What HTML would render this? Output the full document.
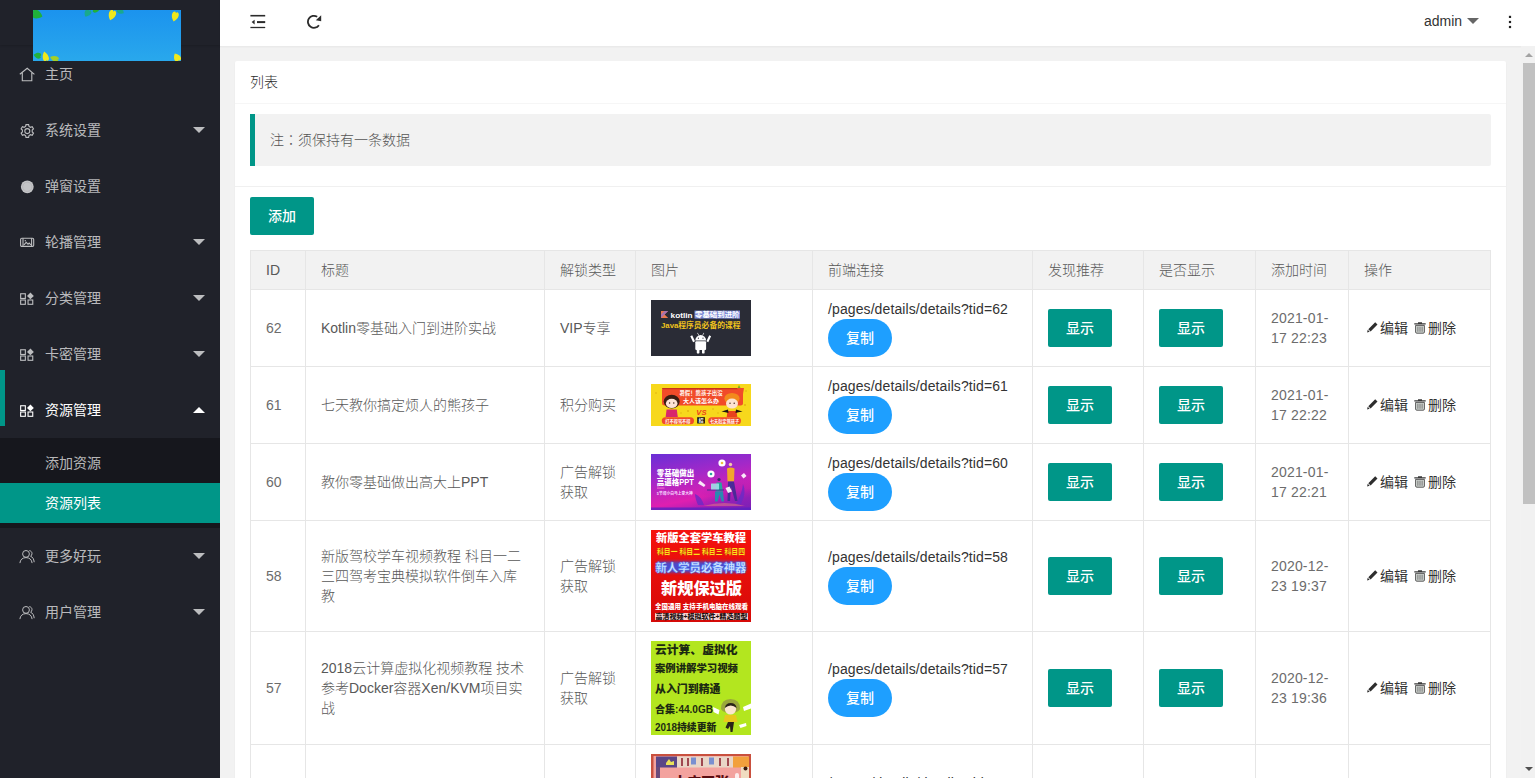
<!DOCTYPE html>
<html lang="zh-CN">
<head>
<meta charset="utf-8">
<title>资源列表</title>
<style>
*{box-sizing:border-box;margin:0;padding:0}
html,body{width:1535px;height:778px;overflow:hidden}
body{position:relative;background:#f2f2f2;color:#333;font:14px/20px "Liberation Sans","Noto Sans CJK SC",sans-serif}
a{color:#333;text-decoration:none}
/* ---------- sidebar ---------- */
.side{position:absolute;left:0;top:0;width:220px;height:778px;background:#20222a;color:rgba(255,255,255,.7)}
.logo{position:absolute;left:0;top:0;width:220px;height:45px;box-shadow:0 1px 2px 0 rgba(0,0,0,.15)}
.logo svg{position:absolute;left:33px;top:10px}
.nav{position:absolute;left:0;top:46px;width:220px;list-style:none}
.nav li.item>a{display:block;position:relative;height:56px;line-height:56px;padding-left:45px;color:rgba(255,255,255,.7);font-size:14px}
.nav li.item.on>a{color:#fff}
.nav .ico{position:absolute;left:19px;top:20px;width:16px;height:16px}
.nav .more{position:absolute;right:15px;top:25px;width:0;height:0;border:6px solid transparent;border-top-color:rgba(255,255,255,.7)}
.nav li.on .more{top:19px;border-top-color:transparent;border-bottom-color:#fff}
.nav dl{background:rgba(0,0,0,.3);padding:5px 0}
.nav dd a{display:block;height:40px;line-height:40px;padding-left:45px;color:rgba(255,255,255,.7)}
.nav dd.this a{background:#009688;color:#fff}
.navbar{position:absolute;left:0;top:370px;width:5px;height:56px;background:#009688}
/* ---------- header ---------- */
.head{position:absolute;left:220px;top:0;width:1315px;height:46px;background:#fff;box-shadow:0 1px 2px 0 rgba(0,0,0,.05)}
.head svg{position:absolute}
.head .user{position:absolute;left:1204px;top:0;line-height:42px;font-size:14px;color:#333}
.head .tri{position:absolute;left:1247px;top:18px;width:0;height:0;border:6px solid transparent;border-top-color:#666}
/* ---------- body ---------- */
.card{position:absolute;left:235px;width:1271px;background:#fff;border-radius:2px;box-shadow:0 1px 2px 0 rgba(0,0,0,.05)}
.card-h{height:43px;line-height:42px;padding:0 15px;border-bottom:1px solid #f6f6f6;color:#2c2c2c;font-size:14px;font-weight:300}
.quote{font-weight:300;margin:10px 15px 10px;padding:15px;line-height:22px;border-left:5px solid #009688;border-radius:0 2px 2px 0;background:#f2f2f2;color:#555}
.sep{position:absolute;left:0;top:125px;width:100%;height:1px;background:#f0f0f0}
.btn{font-weight:500;display:inline-block;height:38px;line-height:38px;padding:0 18px;background:#009688;color:#fff;border-radius:2px;font-size:14px;white-space:nowrap;text-align:center}
.btn.blue{background:#1e9fff;border-radius:100px}
table{font-weight:300;position:absolute;left:15px;top:189px;width:1240px;border-collapse:collapse;table-layout:fixed;color:#585858}
th,td{border:1px solid #e6e6e6;padding:9px 15px;line-height:20px;font-size:14px;text-align:left;font-weight:300;vertical-align:middle;word-break:break-all}
th{background:#f2f2f2;height:39px}
td .pic{display:block;width:100px}
td a.lk{letter-spacing:.1px}
td.dt{letter-spacing:.18px;color:#6c6c6c}
td.n{color:#6c6c6c}
td.op a{color:#333;white-space:nowrap;font-weight:400}
td.op svg{display:inline-block;vertical-align:-2px;width:16px;height:16px}
/* ---------- scrollbar ---------- */
.sb{position:absolute;left:1521px;top:46px;width:14px;height:732px;background:#f1f1f1}
.sb .thumb{position:absolute;left:2px;top:17px;width:12px;height:441px;background:#c1c1c1}
.sb .up,.sb .dn{position:absolute;left:4px;width:0;height:0;border:4px solid transparent}
.sb .up{top:3px;border-bottom-color:#a3a3a3}
.sb .dn{bottom:3px;border-top-color:#505050}
</style>
</head>
<body>

<div class="side">
  <div class="logo">
    <svg width="148" height="51" viewBox="0 0 148 51">
      <defs><linearGradient id="sky" x1="0" y1="0" x2="0" y2="1"><stop offset="0" stop-color="#1b93ee"/><stop offset="1" stop-color="#29a8ec"/></linearGradient></defs>
      <rect width="148" height="51" fill="url(#sky)"/>
      <path d="M0 5C-5 1-4.500-4-1.500-4.500-.5-4.600 0-3.500 0-3 0-3.500.5-4.600 1.500-4.500 4.500-4 5 1 0 5z" fill="#20b13a" transform="translate(4 4.5) rotate(-70) scale(1.15 1.15)"/>
      <path d="M0 5C-5 1-4.500-4-1.500-4.500-.5-4.600 0-3.500 0-3 0-3.500.5-4.600 1.500-4.500 4.500-4 5 1 0 5z" fill="#19a98e" transform="translate(54.5 3) rotate(35) scale(0.85 0.85)"/>
      <path d="M0 5C-5 1-4.500-4-1.500-4.500-.5-4.600 0-3.500 0-3 0-3.500.5-4.600 1.500-4.500 4.500-4 5 1 0 5z" fill="#22b03a" transform="translate(63 -0.5) rotate(-100) scale(0.8 0.8)"/>
      <path d="M0 5C-5 1-4.500-4-1.500-4.500-.5-4.600 0-3.500 0-3 0-3.500.5-4.600 1.500-4.500 4.500-4 5 1 0 5z" fill="#efe81c" transform="translate(79 5) rotate(20) scale(0.95 1.1)"/>
      <path d="M0 5C-5 1-4.500-4-1.500-4.500-.5-4.600 0-3.500 0-3 0-3.500.5-4.600 1.500-4.500 4.500-4 5 1 0 5z" fill="#19a98e" transform="translate(87.5 1) rotate(-55) scale(0.8 0.8)"/>
      <path d="M0 5C-5 1-4.500-4-1.500-4.500-.5-4.600 0-3.500 0-3 0-3.500.5-4.600 1.500-4.500 4.500-4 5 1 0 5z" fill="#efe81c" transform="translate(142 6.5) rotate(15) scale(0.9 1.05)"/>
      <path d="M0 5C-5 1-4.500-4-1.500-4.500-.5-4.600 0-3.500 0-3 0-3.500.5-4.600 1.500-4.500 4.500-4 5 1 0 5z" fill="#efe81c" transform="translate(139 -3) rotate(0) scale(0.6 0.6)"/>
      <path d="M0 5C-5 1-4.500-4-1.500-4.500-.5-4.600 0-3.500 0-3 0-3.500.5-4.600 1.500-4.500 4.500-4 5 1 0 5z" fill="#23b03c" transform="translate(4.5 45.5) rotate(100) scale(0.8 0.8)"/>
      <path d="M0 5C-5 1-4.500-4-1.500-4.500-.5-4.600 0-3.500 0-3 0-3.500.5-4.600 1.500-4.500 4.500-4 5 1 0 5z" fill="#efe81c" transform="translate(12.5 46.5) rotate(165) scale(0.8 1.05)"/>
      <path d="M0 5C-5 1-4.500-4-1.500-4.500-.5-4.600 0-3.500 0-3 0-3.500.5-4.600 1.500-4.500 4.500-4 5 1 0 5z" fill="#a4cf26" transform="translate(21.5 48.5) rotate(110) scale(0.75 0.95)"/>
      <path d="M0 5C-5 1-4.500-4-1.500-4.500-.5-4.600 0-3.500 0-3 0-3.500.5-4.600 1.500-4.500 4.500-4 5 1 0 5z" fill="#efe81c" transform="translate(144 47.5) rotate(150) scale(0.9 0.9)"/>
    </svg>
  </div>
  <ul class="nav">
    <li class="item"><a><svg class="ico" viewBox="0 0 16 16" fill="none" stroke="#bdbec0" stroke-width="1.100"><path d="M.8 8.300 8.200 2.300l7.200 6M3.300 6.800v7.900h9.500V6.800"/></svg>主页</a></li>
    <li class="item"><a><svg class="ico" viewBox="0 0 16 16" fill="none" stroke="#bdbec0" stroke-width="1.100"><g transform="translate(.3 1.100)"><circle cx="8" cy="8" r="2.500"/><path d="M6.700 1.500h2.600l.4 1.800 1.500.9 1.700-.6 1.300 2.200-1.300 1.200v1.800l1.300 1.200-1.300 2.200-1.700-.6-1.500.9-.4 1.800H6.700l-.4-1.800-1.500-.9-1.700.6L1.800 10l1.300-1.200V7L1.800 5.800l1.300-2.200 1.700.6 1.500-.9z"/></g></svg>系统设置<i class="more"></i></a></li>
    <li class="item"><a><svg class="ico" viewBox="0 0 16 16"><circle cx="8.300" cy="8.800" r="6.400" fill="#c3c4c6"/><circle cx="8.300" cy="8.800" r="4.600" fill="none" stroke="#b2b3b6" stroke-width=".8"/></svg>弹窗设置</a></li>
    <li class="item"><a><svg class="ico" viewBox="0 0 16 16" fill="none" stroke="#bdbec0" stroke-width="1.100"><rect x="1.600" y="4.200" width="13.100" height="8.200" rx="1.200"/><path d="M4 4.200v8.200M12.600 4.200v8.200M5 10.800l2.200-2.400 1.800 1.800 1.200-1.200 1.600 1.800"/><circle cx="6.300" cy="6.700" r=".7" fill="#bdbec0" stroke="none"/></svg>轮播管理<i class="more"></i></a></li>
    <li class="item"><a><svg class="ico" viewBox="0 0 16 16" fill="none" stroke="#bdbec0" stroke-width="1.100"><rect x="1.650" y="3.750" width="4.700" height="4.700"/><rect x="1.650" y="10" width="4.700" height="4.300"/><rect x="9.050" y="10" width="4.700" height="4.300"/><path d="M11.400 2.500l3.400 3.400-3.400 3.400L8 5.900z" fill="#bdbec0" stroke="none"/></svg>分类管理<i class="more"></i></a></li>
    <li class="item"><a><svg class="ico" viewBox="0 0 16 16" fill="none" stroke="#bdbec0" stroke-width="1.100"><rect x="1.650" y="3.750" width="4.700" height="4.700"/><rect x="1.650" y="10" width="4.700" height="4.300"/><rect x="9.050" y="10" width="4.700" height="4.300"/><path d="M11.400 2.500l3.400 3.400-3.400 3.400L8 5.900z" fill="#bdbec0" stroke="none"/></svg>卡密管理<i class="more"></i></a></li>
    <li class="item on"><a><svg class="ico" viewBox="0 0 16 16" fill="none" stroke="#fff" stroke-width="1.100"><rect x="1.650" y="3.750" width="4.700" height="4.700"/><rect x="1.650" y="10" width="4.700" height="4.300"/><rect x="9.050" y="10" width="4.700" height="4.300"/><path d="M11.400 2.500l3.400 3.400-3.400 3.400L8 5.900z" fill="#fff" stroke="none"/></svg>资源管理<i class="more"></i></a>
      <dl><dd><a>添加资源</a></dd><dd class="this"><a>资源列表</a></dd></dl>
    </li>
    <li class="item"><a><svg class="ico" viewBox="0 0 16 16" fill="none" stroke="#bdbec0" stroke-width="1"><circle cx="7" cy="5.900" r="3.400"/><path d="M.9 15.100c.3-3.400 2.600-5.500 6.100-5.500s5.800 2.100 6.100 5.500"/><path d="M10.300 2.600c1.700.2 2.700 1.500 2.700 3 0 1.200-.6 2.100-1.400 2.700 2 .7 3.300 2.600 3.600 5.900"/></svg>更多好玩<i class="more"></i></a></li>
    <li class="item"><a><svg class="ico" viewBox="0 0 16 16" fill="none" stroke="#bdbec0" stroke-width="1"><circle cx="7" cy="5.900" r="3.400"/><path d="M.9 15.100c.3-3.400 2.600-5.500 6.100-5.500s5.800 2.100 6.100 5.500"/><path d="M10.300 2.600c1.700.2 2.700 1.500 2.700 3 0 1.200-.6 2.100-1.400 2.700 2 .7 3.300 2.600 3.600 5.900"/></svg>用户管理<i class="more"></i></a></li>
  </ul>
  <div class="navbar"></div>
</div>

<div class="head">
  <svg style="left:30px;top:13px" width="16" height="16" viewBox="0 0 16 16" fill="none" stroke="#2b2b2b"><path d="M.4 2.700h14.800" stroke-width="1.600"/><path d="M7 9.100h8.200" stroke-width="2"/><path d="M.4 14.500h14.800" stroke-width="1.300"/><path d="M4.600 6.800v4.600L1.600 9.100z" fill="#2b2b2b" stroke="none"/></svg>
  <svg style="left:86px;top:13px" width="16" height="16" viewBox="0 0 16 16" fill="none" stroke="#2b2b2b" stroke-width="1.800"><path d="M12.900 12.200A6 6 0 1 1 11.200 3.800"/><path d="M15.200 2.300v5.900l-5.400-.9z" fill="#2b2b2b" stroke="none"/></svg>
  <span class="user">admin</span><i class="tri"></i>
  <svg style="left:1288px;top:15px" width="4" height="16" viewBox="0 0 4 16" fill="#222"><rect x=".9" y=".8" width="2.200" height="2.200"/><rect x=".9" y="5.900" width="2.200" height="2.200"/><rect x=".9" y="10.900" width="2.200" height="2.200"/></svg>
</div>

<div class="card" style="top:61px;height:830px">
  <div class="card-h">列表</div>
  <div class="quote">注<span lang="zh-TW" style="font-family:'Liberation Sans','Noto Sans CJK TC',sans-serif">：</span>须保持有一条数据</div>
  <div class="sep"></div>
  <a class="btn" style="position:absolute;left:15px;top:136px">添加</a>
  <table>
    <colgroup><col style="width:55px"><col style="width:239px"><col style="width:91px"><col style="width:177px"><col style="width:220px"><col style="width:111px"><col style="width:112px"><col style="width:93px"><col style="width:142px"></colgroup>
    <thead><tr><th>ID</th><th>标题</th><th>解锁类型</th><th>图片</th><th>前端连接</th><th>发现推荐</th><th>是否显示</th><th>添加时间</th><th>操作</th></tr></thead>
    <tbody>
      <tr style="height:77px"><td class="n">62</td><td>Kotlin零基础入门到进阶实战</td><td>VIP专享</td><td><svg class="pic" width="100" height="56" viewBox="0 0 100 56" font-family="Liberation Sans,Noto Sans CJK SC,sans-serif">
<rect width="100" height="56" fill="#2a2c36"/>
<path d="M10 10.900h7.200l-3.600 3.500 3.600 3.600H10z" fill="#e9784e"/><path d="M10 14.400l3.500-3.500H17.200L10 18z" fill="#8a6fd8" opacity=".7"/>
<text x="19.600" y="17.500" font-size="8" font-weight="700" fill="#fff" textLength="22" lengthAdjust="spacingAndGlyphs">kotlin</text>
<rect x="43.500" y="10.600" width="45.500" height="8" fill="#7c8ad6"/>
<text x="44" y="17.400" font-size="7.400" font-weight="700" fill="#fff" textLength="44.500" lengthAdjust="spacingAndGlyphs">零基础到进阶</text>
<text x="10" y="28.300" font-size="8" font-weight="700" fill="#f0c31c" textLength="79.500" lengthAdjust="spacingAndGlyphs">Java程序员必备的课程</text>
<g fill="#fff"><path d="M44.300 40.500a5.400 5.400 0 0 1 10.800 0z"/><rect x="44.300" y="41.300" width="10.800" height="8.600" rx="1"/><rect x="45.800" y="49" width="2.600" height="4.600" rx="1.200"/><rect x="51" y="49" width="2.600" height="4.600" rx="1.200"/><path d="M39.300 36.200l1.900-.9 2.800 6-1.900.9zM60.100 36.200l-1.900-.9-2.800 6 1.900.9z"/><path d="M46.200 33l.5-.3 1.400 2.500-.5.300zM53.200 33l-.5-.3-1.400 2.500.5.300z"/></g>
<circle cx="47.400" cy="38.200" r=".6" fill="#2a2c36"/><circle cx="52" cy="38.200" r=".6" fill="#2a2c36"/>
</svg></td><td><a class="lk">/pages/details/details?tid=62</a><br><a class="btn blue">复制</a></td><td><a class="btn">显示</a></td><td><a class="btn">显示</a></td><td class="dt">2021-01-17 22:23</td><td class="op"><a><svg viewBox="0 0 16 16"><path d="M11.200 3.300l2.300 2.300-6.900 6.900-2.300-2.300zM3.700 10.800l2 2-2.600.6z" fill="#2e2e2e"/></svg>编辑</a> <a><svg viewBox="0 0 16 16"><path d="M2.300 4.300h11.400v1.100H2.300zM6 3.300h4v1H6z" fill="#3a3a3a"/><path d="M3.600 6.400h8.800V13a1.200 1.200 0 0 1-1.200 1.200H4.800A1.200 1.200 0 0 1 3.600 13z" fill="#d3d8d4" stroke="#4a4a4a" stroke-width=".9"/><path d="M5.900 7.600v5.200M8 7.600v5.200M10.100 7.600v5.200" stroke="#5a5a5a" stroke-width=".8"/></svg>删除</a></td></tr>
      <tr style="height:77px"><td class="n">61</td><td>七天教你搞定烦人的熊孩子</td><td>积分购买</td><td><svg class="pic" width="100" height="42" viewBox="0 0 100 42" font-family="Liberation Sans,Noto Sans CJK SC,sans-serif">
<rect width="100" height="42" fill="#f7d81c"/>
<g fill="#e0b010"><circle cx="5" cy="9" r=".8"/><circle cx="37" cy="27" r=".9"/><circle cx="62" cy="25" r=".8"/><circle cx="95" cy="7" r=".8"/><circle cx="94" cy="21" r=".9"/><circle cx="30" cy="29" r=".7"/><circle cx="67" cy="29" r=".7"/></g>
<rect x="11" y="4" width="81" height="17.500" rx="2.500" fill="#f14b29"/><rect x="11" y="4" width="81" height="1.200" rx=".6" fill="#c8321a"/>
<text x="50" y="11.200" font-size="5.400" font-weight="700" fill="#fff4ee" text-anchor="middle">暑假！熊孩子出没</text>
<text x="50" y="19" font-size="6" font-weight="700" fill="#fff" text-anchor="middle">大人该怎么办</text>
<ellipse cx="20.700" cy="17.600" rx="8" ry="6.800" fill="#3b1d12"/><ellipse cx="20.700" cy="19.400" rx="5.800" ry="4.600" fill="#fde3d6"/><path d="M15.600 25.500h10.200l1 7.500H14.600z" fill="#d9266c"/>
<circle cx="18.600" cy="19" r=".7" fill="#3b1d12"/><circle cx="22.800" cy="19" r=".7" fill="#3b1d12"/>
<ellipse cx="81" cy="14.500" rx="7.600" ry="5.600" fill="#f28a1c"/><ellipse cx="81" cy="19.600" rx="6" ry="5" fill="#fde3d0"/><path d="M76.500 27h9l.8 6H75.700z" fill="#e9421c"/>
<path d="M70.500 27.500l6.500-2 .5 3.500-3-.8zM91.500 27.500l-6.500-2-.5 3.500 3-.8z" fill="#1c1410"/>
<circle cx="79" cy="19.300" r=".7" fill="#3b1d12"/><circle cx="83.200" cy="19.300" r=".7" fill="#3b1d12"/>
<path d="M88 1l1.500 3-3 .2z" fill="#7ab020"/><path d="M86 4h7l-2 12z" fill="#f14b29"/>
<text x="50.400" y="30.600" font-size="7.600" font-weight="700" font-style="italic" fill="#f0421c" text-anchor="middle">VS</text>
<rect x="10.800" y="33.200" width="32.200" height="7" rx="3.500" fill="#f14b29"/><rect x="57.200" y="33.200" width="32.800" height="7" rx="3.500" fill="#f14b29"/>
<text x="26.900" y="38.500" font-size="4.200" font-weight="700" fill="#fff" text-anchor="middle">打不得骂不得</text>
<text x="73.600" y="38.500" font-size="4.200" font-weight="700" fill="#fff" text-anchor="middle">七天搞定熊孩子</text>
<rect x="46.200" y="33.200" width="7.700" height="6.300" fill="#141410"/>
<text x="50" y="38.300" font-size="5" font-weight="700" fill="#fff" text-anchor="middle">招</text>
</svg></td><td><a class="lk">/pages/details/details?tid=61</a><br><a class="btn blue">复制</a></td><td><a class="btn">显示</a></td><td><a class="btn">显示</a></td><td class="dt">2021-01-17 22:22</td><td class="op"><a><svg viewBox="0 0 16 16"><path d="M11.200 3.300l2.300 2.300-6.900 6.900-2.300-2.300zM3.700 10.800l2 2-2.600.6z" fill="#2e2e2e"/></svg>编辑</a> <a><svg viewBox="0 0 16 16"><path d="M2.300 4.300h11.400v1.100H2.300zM6 3.300h4v1H6z" fill="#3a3a3a"/><path d="M3.600 6.400h8.800V13a1.200 1.200 0 0 1-1.200 1.200H4.800A1.200 1.200 0 0 1 3.600 13z" fill="#d3d8d4" stroke="#4a4a4a" stroke-width=".9"/><path d="M5.900 7.600v5.200M8 7.600v5.200M10.100 7.600v5.200" stroke="#5a5a5a" stroke-width=".8"/></svg>删除</a></td></tr>
      <tr style="height:77px"><td class="n">60</td><td>教你零基础做出高大上PPT</td><td>广告解锁获取</td><td><svg class="pic" width="100" height="56" viewBox="0 0 100 56" font-family="Liberation Sans,Noto Sans CJK SC,sans-serif">
<defs><linearGradient id="g3" x1="0" y1="0" x2=".35" y2="1"><stop offset="0" stop-color="#6a2fd6"/><stop offset=".45" stop-color="#a428c8"/><stop offset=".85" stop-color="#df1fb0"/><stop offset="1" stop-color="#b51fb4"/></linearGradient></defs>
<rect width="100" height="56" fill="url(#g3)"/>
<defs><radialGradient id="g3b" cx="1" cy="1" r=".6"><stop offset="0" stop-color="#6a20b8" stop-opacity=".8"/><stop offset="1" stop-color="#6a20b8" stop-opacity="0"/></radialGradient></defs><rect width="100" height="56" fill="url(#g3b)"/><rect y="53.500" width="100" height="2.500" fill="#5a22c0" opacity=".8"/>
<path d="M44 40q6 2 9 11h-6q-3-7-3-11zM92 30q4 8-2 20h-5q6-10 7-20z" fill="#6a2ac6" opacity=".8"/>
<path d="M52 52h42q-20-6-42 0z" fill="#f08a78" opacity=".45"/>
<text x="5.800" y="22" font-size="8.200" font-weight="900" fill="#fff" textLength="37.500" lengthAdjust="spacingAndGlyphs">零基础做出</text>
<text x="5.800" y="31.200" font-size="8.200" font-weight="900" fill="#fff" textLength="37" lengthAdjust="spacingAndGlyphs">高逼格PPT</text>
<rect x="6" y="33.600" width="7.500" height=".9" fill="#ff7ad0"/>
<text x="5.800" y="41" font-size="4" font-weight="700" fill="#f6d8ff" textLength="36" lengthAdjust="spacingAndGlyphs">5节课小白马上变大神</text>
<circle cx="71" cy="9" r="3.600" fill="#fff"/><circle cx="71" cy="9" r="1.300" fill="#f0c040"/>
<circle cx="60" cy="20" r="3.600" fill="#fff"/><circle cx="60" cy="20" r="1.300" fill="#2aa8a0"/>
<path d="M47 29.500l2-3 5.500 4.500-1.500 2z" fill="#fff" opacity=".9"/>
<path d="M90 21.500l3-2.500 2.500 3-3 2.500z" fill="#fff" opacity=".9"/>
<circle cx="79.500" cy="10.500" r="1.700" fill="#f3c9a8"/><path d="M76 14.500q3.500-2 7.500 0l-.5 13h-6.500z" fill="#f2a62c"/><path d="M77 27.500h6l3.500 19.500h-2.500l-4-14-1 14h-2.500z" fill="#4a2a98"/>
<circle cx="68" cy="25.500" r="1.600" fill="#3a2a70"/><path d="M65.500 28.500h5l1.500 9h-7z" fill="#27a59c"/><path d="M64 37.500h8l1 10h-2.500l-2-7-2 7H64z" fill="#2a8ab0"/>
<rect x="56" y="35.500" width="17" height="1" fill="#4a2a98"/><rect x="60" y="29.500" width="8" height="6" rx=".5" fill="#9fe0e8" opacity=".9"/>
<path d="M74.500 34l4-1.500 2.500 5-4 1.500z" fill="#fff" opacity=".9"/>
</svg></td><td><a class="lk">/pages/details/details?tid=60</a><br><a class="btn blue">复制</a></td><td><a class="btn">显示</a></td><td><a class="btn">显示</a></td><td class="dt">2021-01-17 22:21</td><td class="op"><a><svg viewBox="0 0 16 16"><path d="M11.200 3.300l2.300 2.300-6.900 6.900-2.300-2.300zM3.700 10.800l2 2-2.600.6z" fill="#2e2e2e"/></svg>编辑</a> <a><svg viewBox="0 0 16 16"><path d="M2.300 4.300h11.400v1.100H2.300zM6 3.300h4v1H6z" fill="#3a3a3a"/><path d="M3.600 6.400h8.800V13a1.200 1.200 0 0 1-1.200 1.200H4.800A1.200 1.200 0 0 1 3.600 13z" fill="#d3d8d4" stroke="#4a4a4a" stroke-width=".9"/><path d="M5.900 7.600v5.200M8 7.600v5.200M10.100 7.600v5.200" stroke="#5a5a5a" stroke-width=".8"/></svg>删除</a></td></tr>
      <tr style="height:111px"><td class="n">58</td><td>新版驾校学车视频教程 科目一二三四驾考宝典模拟软件倒车入库教</td><td>广告解锁获取</td><td><svg class="pic" width="100" height="92" viewBox="0 0 100 92" font-family="Liberation Sans,Noto Sans CJK SC,sans-serif">
<defs><linearGradient id="g4" x1="0" y1="0" x2="0" y2="1"><stop offset="0" stop-color="#f5120e"/><stop offset="1" stop-color="#d60a08"/></linearGradient></defs>
<rect width="100" height="92" fill="url(#g4)"/>
<text x="50" y="12.200" font-size="11.200" font-weight="900" fill="#fff" text-anchor="middle" textLength="90" lengthAdjust="spacingAndGlyphs">新版全套学车教程</text>
<text x="50" y="24.200" font-size="7.200" font-weight="900" fill="#ffe21a" stroke="#a03000" stroke-width=".15" text-anchor="middle" textLength="88" lengthAdjust="spacingAndGlyphs">科目一 科目二 科目三 科目四</text>
<defs><filter id="gl" x="-10%" y="-40%" width="120%" height="180%"><feGaussianBlur stdDeviation="1.600"/></filter></defs>
<rect x="5" y="31.500" width="90" height="11" rx="4" fill="#2f55f0" opacity=".85" filter="url(#gl)"/>
<text x="50" y="41.600" font-size="11.600" font-weight="900" fill="#cfe6ff" stroke="#4f7ef5" stroke-width=".4" text-anchor="middle" textLength="91" lengthAdjust="spacingAndGlyphs">新人学员必备神器</text>
<text x="50.500" y="64.400" font-size="16.200" font-weight="900" fill="#fff" text-anchor="middle" textLength="81" lengthAdjust="spacingAndGlyphs">新规保过版</text>
<text x="50.500" y="79" font-size="6.600" font-weight="900" fill="#fff" text-anchor="middle" textLength="93" lengthAdjust="spacingAndGlyphs">全国通用 支持手机电脑在线观看</text>
<rect x="4" y="83" width="93" height="7" fill="#fff" opacity=".82"/>
<text x="50.500" y="89.200" font-size="7" font-weight="900" fill="#201010" text-anchor="middle" textLength="92" lengthAdjust="spacingAndGlyphs">高清视频+模拟软件+精选题型</text>
</svg></td><td><a class="lk">/pages/details/details?tid=58</a><br><a class="btn blue">复制</a></td><td><a class="btn">显示</a></td><td><a class="btn">显示</a></td><td class="dt">2020-12-23 19:37</td><td class="op"><a><svg viewBox="0 0 16 16"><path d="M11.200 3.300l2.300 2.300-6.900 6.900-2.300-2.300zM3.700 10.800l2 2-2.600.6z" fill="#2e2e2e"/></svg>编辑</a> <a><svg viewBox="0 0 16 16"><path d="M2.300 4.300h11.400v1.100H2.300zM6 3.300h4v1H6z" fill="#3a3a3a"/><path d="M3.600 6.400h8.800V13a1.200 1.200 0 0 1-1.200 1.200H4.800A1.200 1.200 0 0 1 3.600 13z" fill="#d3d8d4" stroke="#4a4a4a" stroke-width=".9"/><path d="M5.900 7.600v5.200M8 7.600v5.200M10.100 7.600v5.200" stroke="#5a5a5a" stroke-width=".8"/></svg>删除</a></td></tr>
      <tr style="height:113px"><td class="n">57</td><td>2018云计算虚拟化视频教程 技术参考Docker容器Xen/KVM项目实战</td><td>广告解锁获取</td><td><svg class="pic" width="100" height="94" viewBox="0 0 100 94" font-family="Liberation Sans,Noto Sans CJK SC,sans-serif">
<rect width="100" height="94" fill="#b3e61f"/>
<g font-weight="900" fill="#1c2a12">
<text x="4" y="12.600" font-size="11.600" textLength="82.500" lengthAdjust="spacingAndGlyphs">云计算、虚拟化</text>
<text x="4" y="31.200" font-size="10.400" textLength="83" lengthAdjust="spacingAndGlyphs">案例讲解学习视频</text>
<text x="4" y="51.600" font-size="11" textLength="65.500" lengthAdjust="spacingAndGlyphs">从入门到精通</text>
<text x="4" y="71.600" font-size="10.200" textLength="58" lengthAdjust="spacingAndGlyphs">合集:44.0GB</text>
<text x="4" y="90" font-size="10" textLength="61.500" lengthAdjust="spacingAndGlyphs">2018持续更新</text>
</g>
<path d="M70 68q0-10 9.500-10T89 68q-2 4-9.500 4T70 68z" fill="#9aa83a"/><circle cx="79.500" cy="68" r="5.600" fill="#fbe6cf"/><path d="M73.700 67q1-5 6-5t6 5q-3-2.500-6-2.500t-6 2.500z" fill="#2a2418"/>
<path d="M74 74h11l1.500 7h-14z" fill="#e8c81e"/><path d="M77 81h6l-1.500 10h-2l-.5-6-2 3-2.500-1.500z" fill="#2a2418"/>
<path d="M62 66l6.500 3-1 4.500-5-2.500zM92 66l8-3.500v5l-7 2.500zM88 84l7-2 .5 3-6 2z" fill="#fff"/>
</svg></td><td><a class="lk">/pages/details/details?tid=57</a><br><a class="btn blue">复制</a></td><td><a class="btn">显示</a></td><td><a class="btn">显示</a></td><td class="dt">2020-12-23 19:36</td><td class="op"><a><svg viewBox="0 0 16 16"><path d="M11.200 3.300l2.300 2.300-6.900 6.900-2.300-2.300zM3.700 10.800l2 2-2.600.6z" fill="#2e2e2e"/></svg>编辑</a> <a><svg viewBox="0 0 16 16"><path d="M2.300 4.300h11.400v1.100H2.300zM6 3.300h4v1H6z" fill="#3a3a3a"/><path d="M3.600 6.400h8.800V13a1.200 1.200 0 0 1-1.200 1.200H4.800A1.200 1.200 0 0 1 3.600 13z" fill="#d3d8d4" stroke="#4a4a4a" stroke-width=".9"/><path d="M5.900 7.600v5.200M8 7.600v5.200M10.100 7.600v5.200" stroke="#5a5a5a" stroke-width=".8"/></svg>删除</a></td></tr>
      <tr style="height:115px"><td class="n">56</td><td>淘宝天猫开店运营教程</td><td>广告解锁获取</td><td><svg class="pic" width="100" height="96" viewBox="0 0 100 96" font-family="Liberation Sans,Noto Sans CJK SC,sans-serif">
<rect width="100" height="96" fill="#c9503e"/>
<rect x="2.500" y="2" width="95" height="92" fill="#f3a29e"/>
<rect x="5" y="2.500" width="21" height="11" fill="#5a4686"/><rect x="26" y="2.500" width="56" height="11" fill="#e9d6c8"/><rect x="82" y="2.500" width="16" height="11" fill="#f2a03c"/>
<g fill="#7a8fd0"><rect x="40" y="3.500" width="5" height="7"/><rect x="58" y="3.500" width="5" height="7"/></g><g fill="#a04850"><rect x="30" y="4" width="2" height="8"/><rect x="36" y="4" width="2" height="8"/><rect x="50" y="4" width="2" height="8"/><rect x="68" y="4" width="2" height="8"/><rect x="76" y="4" width="2" height="8"/></g>
<rect x="5" y="13" width="4" height="83" fill="#6a4a7a"/>
<path d="M15 9l3-4 2 3 3-1v4h-8z" fill="#e9e05a"/>
<rect x="90" y="13" width="8" height="40" fill="#f0dcc0"/><circle cx="94.500" cy="14.500" r="2" fill="#3a1c10"/>
<rect x="84" y="19" width="4" height="30" rx="2" fill="#fff" opacity=".8"/>
<text x="50" y="33" font-size="14" font-weight="900" fill="#5a0c10" text-anchor="middle">小店开张</text>
</svg></td><td><a class="lk">/pages/details/details?tid=56</a><br><a class="btn blue">复制</a></td><td><a class="btn">显示</a></td><td><a class="btn">显示</a></td><td class="dt">2020-12-23 19:35</td><td class="op"><a><svg viewBox="0 0 16 16"><path d="M11.200 3.300l2.300 2.300-6.900 6.900-2.300-2.300zM3.700 10.800l2 2-2.600.6z" fill="#2e2e2e"/></svg>编辑</a> <a><svg viewBox="0 0 16 16"><path d="M2.300 4.300h11.400v1.100H2.300zM6 3.300h4v1H6z" fill="#3a3a3a"/><path d="M3.600 6.400h8.800V13a1.200 1.200 0 0 1-1.200 1.200H4.800A1.200 1.200 0 0 1 3.600 13z" fill="#d3d8d4" stroke="#4a4a4a" stroke-width=".9"/><path d="M5.900 7.600v5.200M8 7.600v5.200M10.100 7.600v5.200" stroke="#5a5a5a" stroke-width=".8"/></svg>删除</a></td></tr>
    </tbody>
  </table>
</div>

<div class="sb"><i class="up"></i><div class="thumb"></div><i class="dn"></i></div>

</body>
</html>
